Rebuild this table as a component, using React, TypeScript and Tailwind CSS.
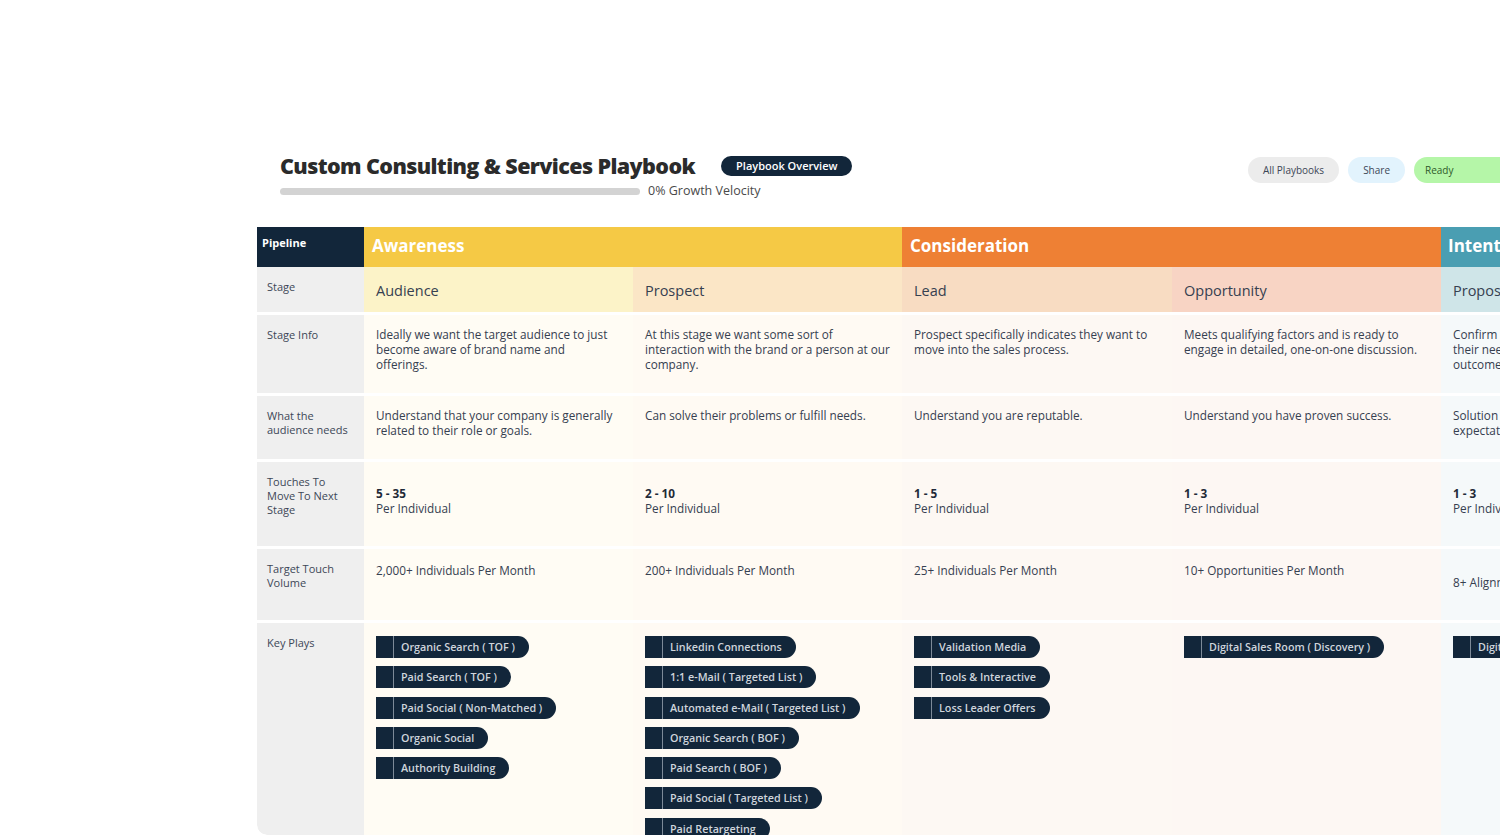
import React from "react";

const FONT = { fontFamily: '"Open Sans", "Noto Sans", sans-serif' };

type Col = {
  stage: string;
  w: string;
  stageBg: string;
  bodyBg: string;
  info: string[];
  needs: string[];
  touches: string;
  volume: string;
  volumeLow?: boolean;
  plays: string[];
};

const cols: Col[] = [
  {
    stage: "Audience",
    w: "w-[269px]",
    stageBg: "bg-[#fcf3c8]",
    bodyBg: "bg-[#fffcf4]",
    info: ["Ideally we want the target audience to just", "become aware of brand name and", "offerings."],
    needs: ["Understand that your company is generally", "related to their role or goals."],
    touches: "5 - 35",
    volume: "2,000+ Individuals Per Month",
    plays: ["Organic Search ( TOF )", "Paid Search ( TOF )", "Paid Social ( Non-Matched )", "Organic Social", "Authority Building"],
  },
  {
    stage: "Prospect",
    w: "w-[269px]",
    stageBg: "bg-[#fbe6c6]",
    bodyBg: "bg-[#fffaf3]",
    info: ["At this stage we want some sort of", "interaction with the brand or a person at our", "company."],
    needs: ["Can solve their problems or fulfill needs."],
    touches: "2 - 10",
    volume: "200+ Individuals Per Month",
    plays: [
      "Linkedin Connections",
      "1:1 e-Mail ( Targeted List )",
      "Automated e-Mail ( Targeted List )",
      "Organic Search ( BOF )",
      "Paid Search ( BOF )",
      "Paid Social ( Targeted List )",
      "Paid Retargeting",
    ],
  },
  {
    stage: "Lead",
    w: "w-[270px]",
    stageBg: "bg-[#f8dcc2]",
    bodyBg: "bg-[#fdf8f3]",
    info: ["Prospect specifically indicates they want to", "move into the sales process."],
    needs: ["Understand you are reputable."],
    touches: "1 - 5",
    volume: "25+ Individuals Per Month",
    plays: ["Validation Media", "Tools & Interactive", "Loss Leader Offers"],
  },
  {
    stage: "Opportunity",
    w: "w-[269px]",
    stageBg: "bg-[#f8d4c4]",
    bodyBg: "bg-[#fdf7f3]",
    info: ["Meets qualifying factors and is ready to", "engage in detailed, one-on-one discussion."],
    needs: ["Understand you have proven success."],
    touches: "1 - 3",
    volume: "10+ Opportunities Per Month",
    plays: ["Digital Sales Room ( Discovery )"],
  },
  {
    stage: "Proposal",
    w: "w-[270px]",
    stageBg: "bg-[#cfe5e8]",
    bodyBg: "bg-[#f5f9fa]",
    info: ["Confirm that solution meets", "their needs and desired", "outcomes."],
    needs: ["Solution meets their", "expectations."],
    touches: "1 - 3",
    volume: "8+ Alignment Meetings Per Month",
    volumeLow: true,
    plays: ["Digital Sales Room ( Proposal )"],
  },
];

function Pill({ label }: { label: string }) {
  return (
    <div className="flex h-[22px] shrink-0 items-center self-start rounded-l-[4px] rounded-r-full bg-[#12263a]">
      <div className="h-full w-[18px] shrink-0 border-r border-[#7d8a98]" />
      <span className="whitespace-nowrap pl-[7px] pr-[14px] text-[10.75px] font-semibold text-[#cfd5dc]">{label}</span>
    </div>
  );
}

function Label({ children, h, extra = "" }: { children: React.ReactNode; h: string; extra?: string }) {
  return (
    <div className={`w-[107px] shrink-0 bg-[#efefef] px-[10px] pt-[13px] text-[11px] leading-[14px] text-[#3d4757] ${h} ${extra}`}>
      {children}
    </div>
  );
}

function Lines({ lines }: { lines: string[] }) {
  return (
    <>
      {lines.map((l, i) => (
        <div key={i} className="whitespace-nowrap">
          {l}
        </div>
      ))}
    </>
  );
}

export default function App() {
  return (
    <div className="relative h-[836px] w-[1500px] overflow-hidden bg-white text-[#364050]" style={FONT}>
      {/* Header */}
      <div className="flex w-[1540px] pl-[280px] pt-[152px]">
        <div className="flex flex-col">
          <div className="flex h-[28px] items-center">
            <h1 className="whitespace-nowrap text-[21.5px] font-extrabold tracking-[-0.6px] text-[#2b2b2b]">
              Custom Consulting &amp; Services Playbook
            </h1>
            <div className="ml-[26px] flex h-[20px] items-center rounded-full bg-[#12263a] px-[15px] text-[11px] font-semibold text-white">
              Playbook Overview
            </div>
          </div>
          <div className="mt-[4px] flex h-[15px] items-center">
            <div className="h-[7px] w-[360px] rounded-full bg-[#d3d3d3]" />
            <span className="ml-[8px] text-[12.5px] text-[#4a4a4a]">0% Growth Velocity</span>
          </div>
        </div>
        <div className="ml-auto mt-[5px] flex gap-[9px] text-[10px] font-medium">
          <div className="flex h-[26px] items-center rounded-full bg-[#ececec] px-[15px] text-[#3d4757]">All Playbooks</div>
          <div className="flex h-[26px] items-center rounded-full bg-[#e2f3fd] px-[15px] text-[#3d4757]">Share</div>
          <div className="flex h-[26px] w-[126px] items-center rounded-full bg-[#b5f6a8] px-[11px] text-[#2f5a2a]">Ready</div>
        </div>
      </div>

      {/* Table */}
      <div className="ml-[257px] mt-[28px] w-[1454px] overflow-hidden rounded-bl-[10px]">
        {/* Phase header */}
        <div className="flex h-[40px]">
          <div className="w-[107px] shrink-0 bg-[#12263a] px-[5px] pt-[8px] text-[11px] font-bold text-white">Pipeline</div>
          <div className="w-[538px] shrink-0 bg-[#f5c945] px-[8px] pt-[8px] text-[17px] font-bold leading-[22px] text-white">
            Awareness
          </div>
          <div className="w-[539px] shrink-0 bg-[#ee8034] px-[8px] pt-[8px] text-[17px] font-bold leading-[22px] text-white">
            Consideration
          </div>
          <div className="w-[270px] shrink-0 bg-[#4a9eb2] px-[7px] pt-[8px] text-[17px] font-bold leading-[22px] text-white">
            Intent
          </div>
        </div>

        {/* Stage */}
        <div className="flex h-[45px]">
          <Label h="h-[45px]">Stage</Label>
          {cols.map((c) => (
            <div key={c.stage} className={`${c.w} shrink-0 px-[12px] pt-[14px] text-[14.5px] leading-[20px] ${c.stageBg}`}>
              {c.stage}
            </div>
          ))}
        </div>

        {/* Stage Info */}
        <div className="mt-[3px] flex h-[78px]">
          <Label h="h-[78px]">Stage Info</Label>
          {cols.map((c) => (
            <div key={c.stage} className={`${c.w} shrink-0 overflow-hidden px-[12px] pt-[12px] text-[11.75px] leading-[15px] ${c.bodyBg}`}>
              <Lines lines={c.info} />
            </div>
          ))}
        </div>

        {/* Needs */}
        <div className="mt-[3px] flex h-[63px]">
          <Label h="h-[63px]">
            What the
            <br />
            audience needs
          </Label>
          {cols.map((c) => (
            <div key={c.stage} className={`${c.w} shrink-0 overflow-hidden px-[12px] pt-[12px] text-[11.75px] leading-[15px] ${c.bodyBg}`}>
              <Lines lines={c.needs} />
            </div>
          ))}
        </div>

        {/* Touches */}
        <div className="mt-[3px] flex h-[84px]">
          <Label h="h-[84px]">
            Touches To
            <br />
            Move To Next
            <br />
            Stage
          </Label>
          {cols.map((c) => (
            <div key={c.stage} className={`${c.w} shrink-0 overflow-hidden px-[12px] pt-[24px] text-[11.75px] leading-[15px] ${c.bodyBg}`}>
              <div className="font-bold text-[#1f2a38]">{c.touches}</div>
              <div className="whitespace-nowrap">Per Individual</div>
            </div>
          ))}
        </div>

        {/* Target */}
        <div className="mt-[3px] flex h-[71px]">
          <Label h="h-[71px]">
            Target Touch
            <br />
            Volume
          </Label>
          {cols.map((c) => (
            <div
              key={c.stage}
              className={`${c.w} shrink-0 overflow-hidden whitespace-nowrap px-[12px] text-[11.75px] leading-[15px] ${c.volumeLow ? "pt-[26px]" : "pt-[14px]"} ${c.bodyBg}`}
            >
              {c.volume}
            </div>
          ))}
        </div>

        {/* Key Plays */}
        <div className="mt-[3px] flex h-[212px]">
          <Label h="h-[212px]" extra="rounded-bl-[10px]">
            Key Plays
          </Label>
          {cols.map((c) => (
            <div key={c.stage} className={`flex ${c.w} shrink-0 flex-col gap-[8.3px] overflow-hidden px-[12px] pt-[13px] ${c.bodyBg}`}>
              {c.plays.map((p) => (
                <Pill key={p} label={p} />
              ))}
            </div>
          ))}
        </div>
      </div>
    </div>
  );
}
